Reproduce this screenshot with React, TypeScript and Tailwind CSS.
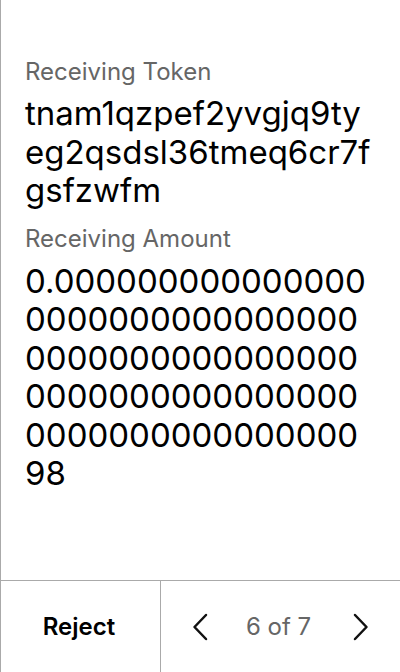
import React from "react";

const AMOUNT = "0." + "0".repeat(79) + "98";

export default function App() {
  return (
    <div
      className="w-[400px] h-[672px] bg-white flex flex-col border-l border-[#aaaaaa] overflow-hidden"
      style={{ fontFamily: "Inter, 'Noto Sans', sans-serif" }}
    >
      <div className="flex-1 pl-6 pr-[26px] pt-[56px]">
        <div className="text-[24px] leading-[32px] text-[#666666]">Receiving Token</div>
        <div className="mt-[6px] text-[33px] leading-[38.5px] text-black break-all">
          tnam1qzpef2yvgjq9tyeg2qsdsl36tmeq6cr7fgsfzwfm
        </div>
        <div className="mt-[13px] text-[24px] leading-[32px] text-[#666666]">Receiving Amount</div>
        <div className="mt-[7px] text-[33px] leading-[38.6px] text-black break-all">{AMOUNT}</div>
      </div>
      <div className="h-[92px] flex border-t border-[#aaaaaa]">
        <button className="w-[160px] flex items-center justify-center pr-[3px] text-[24px] font-semibold text-black border-r border-[#aaaaaa]">
          Reject
        </button>
        <div className="flex-1 flex items-center justify-between px-[31px]">
          <svg width="16" height="28" viewBox="0 0 16 28" fill="none" stroke="#111" strokeWidth="2.5" strokeLinecap="round" strokeLinejoin="round">
            <path d="M14 2 L2.5 14 L14 26" />
          </svg>
          <span className="mr-[4px] text-[24px] text-[#666666]">6 of 7</span>
          <svg width="16" height="28" viewBox="0 0 16 28" fill="none" stroke="#111" strokeWidth="2.5" strokeLinecap="round" strokeLinejoin="round">
            <path d="M2 2 L13.5 14 L2 26" />
          </svg>
        </div>
      </div>
    </div>
  );
}
